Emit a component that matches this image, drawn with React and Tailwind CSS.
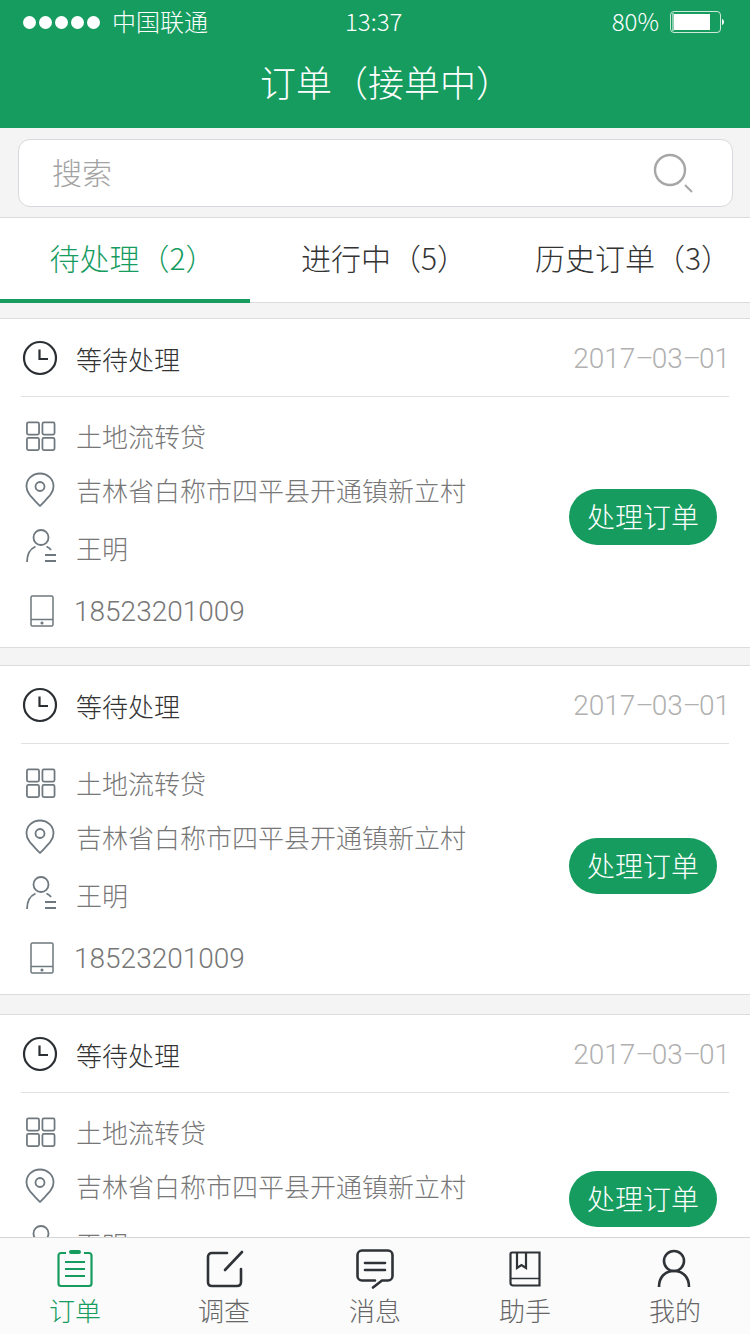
const cjk = { fontFamily: '"Noto Sans CJK SC", sans-serif' };
const latin = { fontFamily: 'Roboto, "Liberation Sans", sans-serif', fontWeight: 300 };

function Clock() {
  return (
    <svg width="36" height="36" viewBox="0 0 36 36" fill="none" stroke="#2b2f33" strokeWidth="2.2">
      <circle cx="18" cy="18" r="16" />
      <path d="M17.500 9.500V19H26" />
    </svg>
  );
}
function Grid() {
  return (
    <svg className="mb-[2px] ml-px" width="31" height="32" viewBox="0 0 32 32" fill="none" stroke="#6f787e" strokeWidth="1.800">
      <rect x="2" y="2" width="12.500" height="12.500" rx="1.500" />
      <rect x="18" y="2" width="12.500" height="12.500" rx="1.500" />
      <rect x="2" y="18" width="12.500" height="12.500" rx="1.500" />
      <rect x="18" y="18" width="12.500" height="12.500" rx="1.500" />
    </svg>
  );
}
function Pin() {
  return (
    <svg className="mb-[2px]" width="32" height="36" viewBox="0 0 32 36" fill="none" stroke="#6f787e" strokeWidth="1.800">
      <path d="M16 34C9 26.500 2.500 21.500 2.500 14.500C2.500 7 8.500 1.500 16 1.500S29.500 7 29.500 14.500C29.500 21.500 23 26.500 16 34Z" />
      <circle cx="16" cy="14.500" r="4.500" />
    </svg>
  );
}
function Person() {
  return (
    <svg className="mb-[6px]" width="32" height="34" viewBox="0 0 32 34" fill="none" stroke="#6f787e" strokeWidth="1.800">
      <circle cx="17" cy="8.500" r="7.500" />
      <path d="M3 33C3 26 6 20 11.500 17.500M22.500 17.500C24.500 18.500 26 19.500 27 21" />
      <path d="M21 26H32M21 32H32" />
    </svg>
  );
}
function Phone() {
  return (
    <svg width="26" height="34" viewBox="0 0 26 34" fill="none" stroke="#6f787e" strokeWidth="1.500">
      <rect x="2" y="2" width="22" height="30" rx="1.500" />
      <path d="M2 25.500H24" />
      <circle cx="13" cy="29" r="0.800" fill="#6f787e" />
    </svg>
  );
}

function Card({ btn, mt, clipped }) {
  return (
    <div className={`bg-white border-y border-[#dcdcdc] ${mt}`}>
      <div className="mx-[21px] h-[78px] flex items-center border-b border-[#e2e2e2]">
        <div className="w-[38px] ml-px flex items-center"><Clock /></div>
        <span className="ml-[16px] pt-[2px] text-[26px] text-[#333] font-light" style={cjk}>等待处理</span>
        <span className="ml-auto -mr-[1px] pt-[2px] text-[28px] text-[#b0b0b0]" style={latin}>2017<span className="tracking-[-2px]">–</span>03<span className="tracking-[-2px]">–</span>01</span>
      </div>
      <div className="relative pl-[24px] h-[250px]">
        <div className="h-[80px] flex items-center">
          <Grid />
          <span className="ml-[20px] pb-[4px] text-[26px] text-[#777] font-light" style={cjk}>土地流转贷</span>
        </div>
        <div className="h-[28px] flex items-center">
          <Pin />
          <span className="ml-[20px] pb-[4px] text-[26px] text-[#777] font-light" style={cjk}>吉林省白称市四平县开通镇新立村</span>
        </div>
        <div className="h-[88px] flex items-center">
          <Person />
          <span className="ml-[20px] pb-[4px] text-[26px] text-[#777] font-light" style={cjk}>王明</span>
        </div>
        {!clipped && (
          <div className="h-[36px] flex items-center pl-[5px]">
            <Phone />
            <span className="ml-[19px] pt-[2px] text-[28px] text-[#777]" style={latin}>18523201009</span>
          </div>
        )}
        <div className={`absolute right-[33px] w-[148px] h-[56px] rounded-full bg-[#169c5f] text-white text-[28px] font-light flex items-center justify-center ${btn}`} style={cjk}><span className="pb-[2px]">处理订单</span></div>
      </div>
    </div>
  );
}

function TabItem({ icon, label, active, labelShift }) {
  return (
    <div className="flex-1 flex flex-col items-center">
      <div className="h-[42px] mt-[10px] flex items-center justify-center">{icon}</div>
      <span className={`mt-[2px] text-[26px] font-light leading-[36px] ${labelShift || ''} ${active ? 'text-[#169c5f]' : 'text-[#666]'}`} style={cjk}>{label}</span>
    </div>
  );
}

export default function App() {
  return (
    <div className="flex flex-col w-[750px] h-[1334px] overflow-hidden bg-[#f4f4f4]" style={cjk}>
      <div className="h-[128px] shrink-0 bg-[#169c5f] text-white">
        <div className="h-[44px] flex items-center pl-[23px] pr-[26px] relative">
          <div className="flex gap-[3px]">
            {[0, 1, 2, 3, 4].map((i) => <span key={i} className="w-[13px] h-[13px] rounded-full bg-white" />)}
          </div>
          <span className="ml-[12px] pb-[2px] text-[24px] font-light">中国联通</span>
          <span className="absolute left-[345px] pb-[2px] text-[24px] font-light">13:37</span>
          <span className="ml-auto pb-[2px] text-[24px] font-light">80%</span>
          <svg className="ml-[11px]" width="54" height="22" viewBox="0 0 54 22" fill="none">
            <rect x="0.500" y="0.500" width="50" height="21" rx="3.500" stroke="#cfeadd" />
            <rect x="2" y="2" width="2" height="18" fill="#8fd0b0" />
            <rect x="4" y="3" width="36" height="16" fill="#fff" />
            <path d="M52 8C53.500 8.500 54 10 54 11S53.500 13.500 52 14Z" fill="#fff" />
          </svg>
        </div>
        <div className="h-[78px] flex items-center justify-center pl-[22px] pb-[4px] text-[36px] font-light">订单（接单中）</div>
      </div>

      <div className="h-[90px] shrink-0 border-b border-[#dcdcdc] pl-[18px] pr-[17px] pt-[11px]">
        <div className="h-[68px] bg-white border border-[#d8d8de] rounded-[12px] flex items-center pl-[33px] relative">
          <span className="pb-[4px] text-[30px] text-[#a3a3a3] font-light">搜索</span>
          <svg className="absolute left-[634px] top-[13px]" width="42" height="42" viewBox="0 0 42 42" fill="none" stroke="#a6a6a6">
            <circle cx="17" cy="17" r="15" strokeWidth="2.400" />
            <path d="M32 32L39 39" strokeWidth="2" />
          </svg>
        </div>
      </div>

      <div className="h-[85px] shrink-0 bg-white border-b border-[#dcdcdc] flex text-[30px] font-light text-[#333]">
        <div className="w-[250px] h-[85px] pl-[15px] pb-[2px] flex items-center justify-center text-[#169c5f] border-b-4 border-[#169c5f]">待处理（2）</div>
        <div className="w-[250px] pl-[18px] pb-[6px] flex items-center justify-center">进行中（5）</div>
        <div className="w-[250px] pl-[16px] pb-[6px] flex items-center justify-center">历史订单（3）</div>
      </div>

      <div className="flex-1 min-h-0 overflow-hidden">
        <Card mt="mt-[15px]" btn="top-[92px]" />
        <Card mt="mt-[17px]" btn="top-[94px]" />
        <Card mt="mt-[19px]" btn="top-[78px]" clipped />
      </div>

      <div className="h-[97px] shrink-0 bg-[#fbfbfb] border-t border-[#d6d6d6] flex">
        <TabItem active label="订单" icon={
          <svg width="36" height="38" viewBox="0 0 36 38" fill="none" stroke="#169c5f" strokeWidth="2.200">
            <path d="M9 3H4C2.500 3 1.500 4 1.500 5.500V33.500C1.500 35 2.500 36 4 36H32C33.500 36 34.500 35 34.500 33.500V5.500C34.500 4 33.500 3 32 3H27" />
            <rect x="12" y="0" width="12" height="4" rx="2" fill="#169c5f" stroke="none" />
            <path d="M8 12H28M8 19H28M8 26H28" />
          </svg>
        } />
        <TabItem labelShift="pr-[2px]" label="调查" icon={
          <svg width="38" height="38" viewBox="0 0 38 38" fill="none" stroke="#2f3337" strokeWidth="2.600" strokeLinecap="round">
            <path d="M21 3H6C3.500 3 2 4.500 2 7V32C2 34.500 3.500 36 6 36H31C33.500 36 35 34.500 35 32V19" />
            <path d="M19 20L36 2" />
          </svg>
        } />
        <TabItem label="消息" icon={
          <svg width="38" height="40" viewBox="0 0 38 40" fill="none" stroke="#2f3337" strokeWidth="2.600" strokeLinecap="round">
            <path d="M19 31.500H6C3.500 31.500 1.500 29.500 1.500 27V6C1.500 3.500 3.500 1.500 6 1.500H32C34.500 1.500 36.500 3.500 36.500 6V27C36.500 29.500 34.500 31.500 32 31.500H26L17 38.500" />
            <path d="M9 14H29M9 21H29" />
          </svg>
        } />
        <TabItem label="助手" icon={
          <svg width="32" height="36" viewBox="0 0 32 36" fill="none" stroke="#2f3337" strokeWidth="2.200">
            <path d="M3 1.500H30.500V34.500H4C2.500 34.500 1.500 33.500 1.500 32V3C1.500 2 2 1.500 3 1.500Z" />
            <path d="M1.500 27.500H30.500" strokeWidth="1.500" />
            <path d="M8 1.500V17L12.500 14L17 17V1.500" />
          </svg>
        } />
        <TabItem label="我的" icon={
          <svg width="36" height="40" viewBox="0 0 36 40" fill="none" stroke="#2f3337" strokeWidth="2.600">
            <circle cx="17" cy="12" r="10" />
            <path d="M2 38C2 28 8 22 17 22S32 28 32 38" />
          </svg>
        } />
      </div>
    </div>
  );
}
